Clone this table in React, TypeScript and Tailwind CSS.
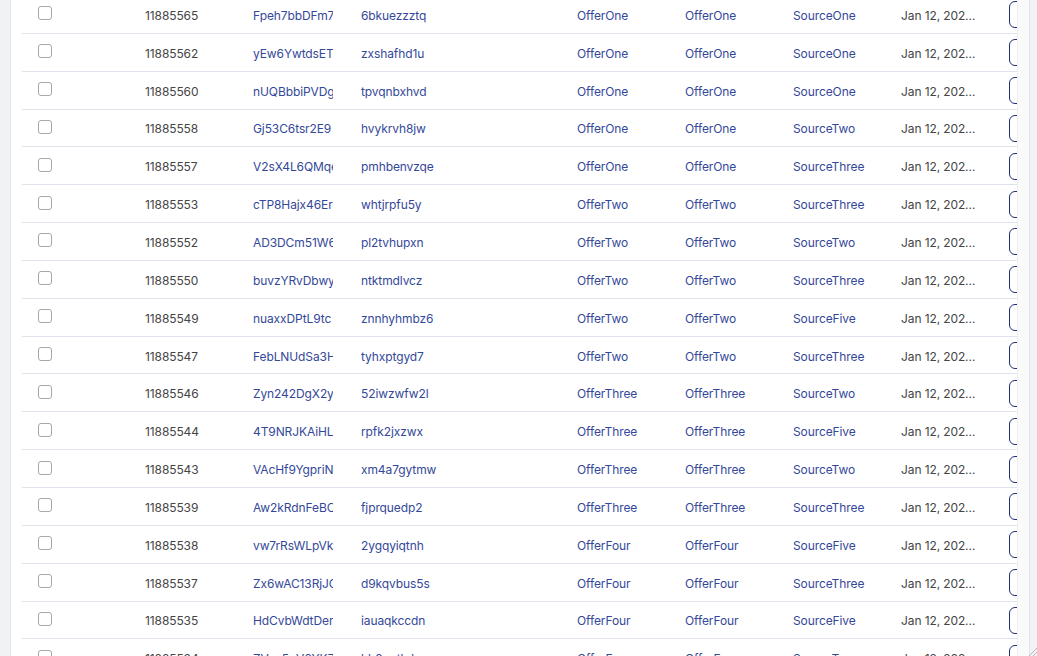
import React from 'react';

type Row = {
  id: string;
  click: string;
  sub: string;
  offer: string;
  landing: string;
  source: string;
};

const rows: Row[] = [
  { id: '11885565', click: 'Fpeh7bbDFm7', sub: '6bkuezzztq', offer: 'OfferOne', landing: 'OfferOne', source: 'SourceOne' },
  { id: '11885562', click: 'yEw6YwtdsET', sub: 'zxshafhd1u', offer: 'OfferOne', landing: 'OfferOne', source: 'SourceOne' },
  { id: '11885560', click: 'nUQBbbiPVDg', sub: 'tpvqnbxhvd', offer: 'OfferOne', landing: 'OfferOne', source: 'SourceOne' },
  { id: '11885558', click: 'Gj53C6tsr2E9', sub: 'hvykrvh8jw', offer: 'OfferOne', landing: 'OfferOne', source: 'SourceTwo' },
  { id: '11885557', click: 'V2sX4L6QMqe', sub: 'pmhbenvzqe', offer: 'OfferOne', landing: 'OfferOne', source: 'SourceThree' },
  { id: '11885553', click: 'cTP8Hajx46Er', sub: 'whtjrpfu5y', offer: 'OfferTwo', landing: 'OfferTwo', source: 'SourceThree' },
  { id: '11885552', click: 'AD3DCm51W6', sub: 'pl2tvhupxn', offer: 'OfferTwo', landing: 'OfferTwo', source: 'SourceTwo' },
  { id: '11885550', click: 'buvzYRvDbwy', sub: 'ntktmdlvcz', offer: 'OfferTwo', landing: 'OfferTwo', source: 'SourceThree' },
  { id: '11885549', click: 'nuaxxDPtL9tc', sub: 'znnhyhmbz6', offer: 'OfferTwo', landing: 'OfferTwo', source: 'SourceFive' },
  { id: '11885547', click: 'FebLNUdSa3H', sub: 'tyhxptgyd7', offer: 'OfferTwo', landing: 'OfferTwo', source: 'SourceThree' },
  { id: '11885546', click: 'Zyn242DgX2y', sub: '52iwzwfw2l', offer: 'OfferThree', landing: 'OfferThree', source: 'SourceTwo' },
  { id: '11885544', click: '4T9NRJKAiHL', sub: 'rpfk2jxzwx', offer: 'OfferThree', landing: 'OfferThree', source: 'SourceFive' },
  { id: '11885543', click: 'VAcHf9YgpriN', sub: 'xm4a7gytmw', offer: 'OfferThree', landing: 'OfferThree', source: 'SourceTwo' },
  { id: '11885539', click: 'Aw2kRdnFeBC', sub: 'fjprquedp2', offer: 'OfferThree', landing: 'OfferThree', source: 'SourceThree' },
  { id: '11885538', click: 'vw7rRsWLpVk', sub: '2ygqyiqtnh', offer: 'OfferFour', landing: 'OfferFour', source: 'SourceFive' },
  { id: '11885537', click: 'Zx6wAC13RjJC', sub: 'd9kqvbus5s', offer: 'OfferFour', landing: 'OfferFour', source: 'SourceThree' },
  { id: '11885535', click: 'HdCvbWdtDer', sub: 'iauaqkccdn', offer: 'OfferFour', landing: 'OfferFour', source: 'SourceFive' },
  { id: '11885534', click: 'ZVau5qV6YKZ', sub: 'hb2rwtkdyn', offer: 'OfferFour', landing: 'OfferFour', source: 'SourceTwo' },
];

const link = 'text-[#34489a]';

const TableRow: React.FC<{ row: Row }> = ({ row }) => (
  <div className="flex items-center h-[37.85px] pt-[3px] border-b border-[#dfe4ec] text-[12px] tracking-[-0.1px] whitespace-nowrap">
    <div className="w-[123px] pl-[16px] flex items-center">
      <span className="block w-[14px] h-[14px] mb-[5px] rounded-[3px] border border-[#a3a7ae] bg-white" />
    </div>
    <div className="w-[108px] text-[#454545]">{row.id}</div>
    <div className="w-[108px]">
      <div className={`w-[80px] overflow-hidden ${link}`}>{row.click}</div>
    </div>
    <div className={`w-[216px] ${link}`}>{row.sub}</div>
    <div className={`w-[108px] ${link}`}>{row.offer}</div>
    <div className={`w-[108px] ${link}`}>{row.landing}</div>
    <div className={`w-[108px] ${link}`}>{row.source}</div>
    <div className="w-[108px]">
      <div className="w-[75px] truncate text-[#454545]">Jan 12, 2024 10:42</div>
    </div>
    <div className="shrink-0 w-[28px] h-[27px] -mt-[2px] rounded-[6px] border-[1.5px] border-[#1f3070] bg-white" />
  </div>
);

export default function App() {
  return (
    <div
      className="relative flex w-[1037px] h-[656px] overflow-hidden bg-[#f1f2f4]"
      style={{ fontFamily: 'Inter, "Noto Sans", sans-serif' }}
    >
      <div className="w-[10px] shrink-0" />
      <div className="flex-1 flex bg-white border-l border-[#e6e8eb] min-w-0">
        <div className="flex-1 min-w-0 overflow-hidden pl-[11px]">
          <div className="-mt-[4px] w-[1100px]">
            {rows.map((r) => (
              <TableRow key={r.id} row={r} />
            ))}
          </div>
        </div>
        <div className="w-[12px] shrink-0 bg-[#fafafa] border-l border-[#efefef]" />
      </div>
      <div className="w-[8px] shrink-0 border-l border-[#e2e4e7] bg-[#f1f2f4]" />
      <svg className="absolute right-0 bottom-0" width="9" height="9" viewBox="0 0 9 9">
        <path d="M9 1 L1 9 M9 5 L5 9" stroke="#b8b8b8" strokeWidth="1" />
      </svg>
    </div>
  );
}
